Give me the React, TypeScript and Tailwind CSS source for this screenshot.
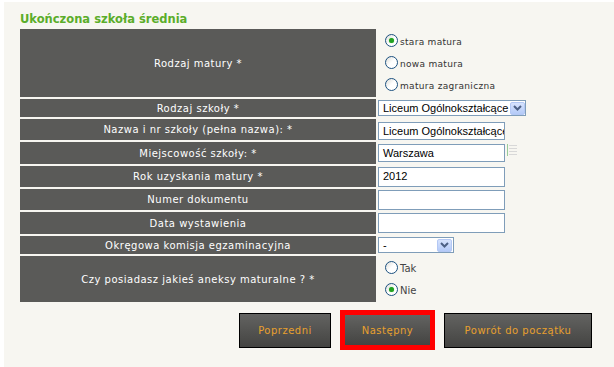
import React from "react";

const font = { fontFamily: '"DejaVu Sans", Verdana, sans-serif' };
const inputFont = { fontFamily: '"Liberation Sans", Arial, sans-serif' };

const Radio = ({ checked }: { checked?: boolean }) => (
  <span className="relative inline-flex h-[13px] w-[13px] shrink-0 items-center justify-center rounded-full border border-[#1c5180] bg-gradient-to-br from-[#dcdcd7] via-white to-white">
    {checked && <span className="h-[5px] w-[5px] rounded-full bg-[#21a121] shadow-[0_0_1px_#6c6]" />}
  </span>
);

const RadioItem = ({ label, checked, big }: { label: string; checked?: boolean; big?: boolean }) => (
  <label className="flex items-end gap-[2px]">
    <Radio checked={checked} />
    <span
      className={big ? "text-[10px] leading-[10px] text-[#444]" : "text-[9px] leading-[9px] tracking-[0.3px] text-[#333]"}
      style={font}
    >
      {label}
    </span>
  </label>
);

const TextInput = ({ value, h = "h-[18px]" }: { value?: string; h?: string }) => (
  <div
    className={`flex w-[127px] items-center overflow-hidden whitespace-nowrap border border-[#7f9db9] bg-white pl-[4px] text-[11px] text-black ${h}`}
    style={inputFont}
  >
    {value}
  </div>
);

const Select = ({ value, w }: { value: string; w: string }) => (
  <div
    className={`flex h-[16px] items-center justify-between gap-[2px] border border-[#7f9db9] bg-white pl-[4px] pr-[1px] text-[11px] text-black ${w}`}
    style={inputFont}
  >
    <span className="whitespace-nowrap">{value}</span>
    <span className="flex h-[13px] w-[15px] shrink-0 items-center justify-center rounded-[2px] border border-[#b4c8f4] bg-gradient-to-b from-[#d7e3fd] to-[#b4caf8]">
      <svg width="9" height="6" viewBox="0 0 9 6">
        <path d="M1 1 L4.5 4.5 L8 1" stroke="#4d6185" strokeWidth="2" fill="none" />
      </svg>
    </span>
  </div>
);

const Label = ({ children }: { children: React.ReactNode }) => (
  <div
    className="flex items-center justify-center bg-[#5a5a58] text-[10px] tracking-[0.5px] text-white"
    style={font}
  >
    {children}
  </div>
);

const Btn = ({ children, w }: { children: React.ReactNode; w: string }) => (
  <button
    className={`flex h-[35px] items-center justify-center border border-black bg-gradient-to-b from-[#636361] to-[#444442] text-[10px] tracking-[0.5px] text-[#e8a02e] ${w}`}
    style={font}
  >
    {children}
  </button>
);

export default function App() {
  return (
    <div className="h-[367px] w-[614px] bg-white pl-[4px] pt-[2px]">
      <div className="h-full bg-[#f7f6f1] pl-[16px] pt-[8px]">
        <h2 className="text-[11.5px] font-bold leading-[19px] text-[#5bad2a]" style={font}>
          Ukończona szkoła średnia
        </h2>
        <div className="grid grid-cols-[356px_1fr] grid-rows-[68px_18px_21px_22px_21px_21px_22px_18px_46px] gap-[2px]">
          <Label>Rodzaj matury *</Label>
          <div className="flex flex-col gap-[9px] pl-[7px] pt-[5px]">
            <RadioItem label="stara matura" checked />
            <RadioItem label="nowa matura" />
            <RadioItem label="matura zagraniczna" />
          </div>

          <Label>Rodzaj szkoły *</Label>
          <div className="flex items-center">
            <Select value="Liceum Ogólnokształcące" w="w-[148px]" />
          </div>

          <Label>Nazwa i nr szkoły (pełna nazwa): *</Label>
          <div className="flex items-end">
            <TextInput value="Liceum Ogólnokształcące" />
          </div>

          <Label>Miejscowość szkoły: *</Label>
          <div className="flex items-start gap-[2px] pt-[2px]">
            <TextInput value="Warszawa" />
            <div className="flex h-[12px] w-[10px] flex-col justify-between border-l border-[#9c9] py-[1px] pl-[1px]">
              <span className="h-px bg-[#d8d8d8]" />
              <span className="h-px bg-[#d8d8d8]" />
              <span className="h-px bg-[#d8d8d8]" />
              <span className="h-px bg-[#d8d8d8]" />
            </div>
          </div>

          <Label>Rok uzyskania matury *</Label>
          <div className="flex items-center">
            <TextInput value="2012" h="h-[20px]" />
          </div>

          <Label>Numer dokumentu</Label>
          <div className="flex items-center pt-[1px]">
            <div className="h-[20px] w-[127px] border border-[#7f9db9] bg-white" />
          </div>

          <Label>Data wystawienia</Label>
          <div className="flex items-center">
            <div className="h-[20px] w-[127px] border border-[#7f9db9] bg-white" />
          </div>

          <Label>Okręgowa komisja egzaminacyjna</Label>
          <div className="flex items-center">
            <Select value="-" w="w-[76px]" />
          </div>

          <Label>Czy posiadasz jakieś aneksy maturalne ? *</Label>
          <div className="flex flex-col gap-[9px] pl-[7px] pt-[5px]">
            <RadioItem label="Tak" big />
            <RadioItem label="Nie" checked big />
          </div>
        </div>

        <div className="mt-[8px] flex items-center justify-end gap-[9px] pr-[22px]">
          <Btn w="w-[92px]">Poprzedni</Btn>
          <div className="border-[5px] border-[#ff0000]">
            <button
              className="flex h-[30px] w-[85px] items-center justify-center bg-gradient-to-b from-[#636361] to-[#444442] text-[10px] tracking-[0.5px] text-[#e8a02e]"
              style={font}
            >
              Następny
            </button>
          </div>
          <Btn w="w-[148px]">Powrót do początku</Btn>
        </div>
      </div>
    </div>
  );
}
